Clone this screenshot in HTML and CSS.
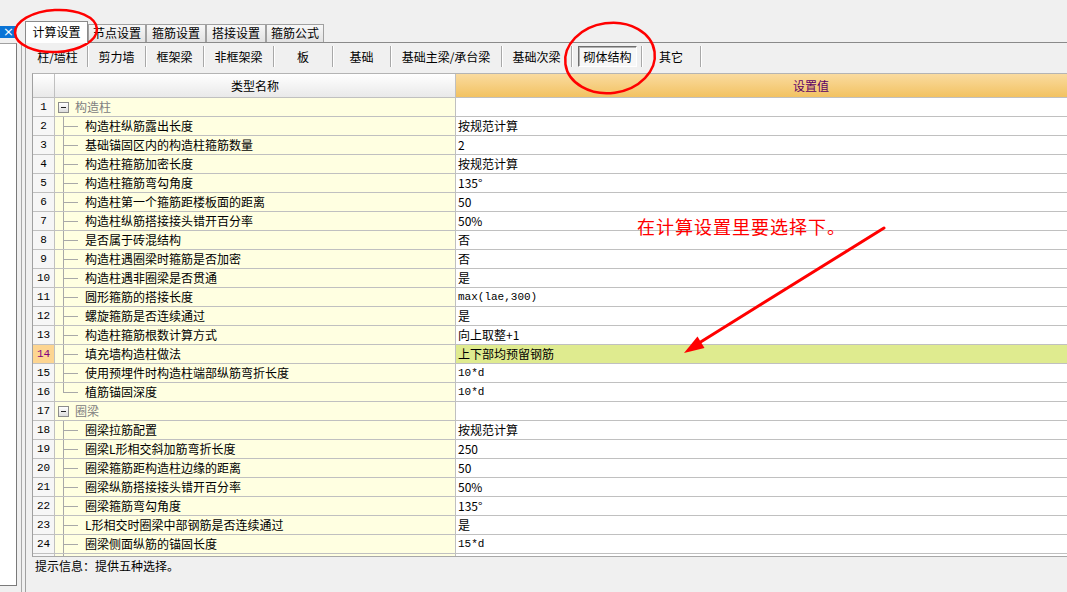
FILE: index.html
```html
<!DOCTYPE html>
<html lang="zh">
<head>
<meta charset="utf-8">
<title>计算设置</title>
<link rel="stylesheet" href="styles.css">
</head>
<body>
<div class="app">
  <aside class="side">
    <div class="closebar"><span class="x">×</span></div>
    <div class="sidepanel"></div>
  </aside>
  <div class="splitter"></div>
  <main class="main">
    <div class="tabs">
      <div class="tab active w63">计算设置</div>
      <div class="tab w58">节点设置</div>
      <div class="tab w60">箍筋设置</div>
      <div class="tab w60">搭接设置</div>
      <div class="tab w58">箍筋公式</div>
    </div>
    <div class="panel">
      <div class="subtabs">
        <div class="sub s60">柱/墙柱</div>
        <div class="sub s58">剪力墙</div>
        <div class="sub s58">框架梁</div>
        <div class="sub s70">非框架梁</div>
        <div class="sub s59">板</div>
        <div class="sub s58">基础</div>
        <div class="sub s111">基础主梁/承台梁</div>
        <div class="sub s70">基础次梁</div>
        <div class="sub s70"><span class="selbox">砌体结构</span></div>
        <div class="sub s59">其它</div>
      </div>
      <div class="grid">
        <div class="ghead">
          <div class="num"></div>
          <div class="name hname">类型名称</div>
          <div class="val hval">设置值</div>
        </div>
        <div class="gbody">
          <div class="row"><div class="num">1</div><div class="name"><span class="tree group"><span class="box"></span></span><span class="gtext">构造柱</span></div><div class="val"></div></div>
          <div class="row"><div class="num">2</div><div class="name"><span class="tree child"></span>构造柱纵筋露出长度</div><div class="val">按规范计算</div></div>
          <div class="row"><div class="num">3</div><div class="name"><span class="tree child"></span>基础锚固区内的构造柱箍筋数量</div><div class="val">2</div></div>
          <div class="row"><div class="num">4</div><div class="name"><span class="tree child"></span>构造柱箍筋加密长度</div><div class="val">按规范计算</div></div>
          <div class="row"><div class="num">5</div><div class="name"><span class="tree child"></span>构造柱箍筋弯勾角度</div><div class="val">135°</div></div>
          <div class="row"><div class="num">6</div><div class="name"><span class="tree child"></span>构造柱第一个箍筋距楼板面的距离</div><div class="val">50</div></div>
          <div class="row"><div class="num">7</div><div class="name"><span class="tree child"></span>构造柱纵筋搭接接头错开百分率</div><div class="val">50%</div></div>
          <div class="row"><div class="num">8</div><div class="name"><span class="tree child"></span>是否属于砖混结构</div><div class="val">否</div></div>
          <div class="row"><div class="num">9</div><div class="name"><span class="tree child"></span>构造柱遇圈梁时箍筋是否加密</div><div class="val">否</div></div>
          <div class="row"><div class="num">10</div><div class="name"><span class="tree child"></span>构造柱遇非圈梁是否贯通</div><div class="val">是</div></div>
          <div class="row"><div class="num">11</div><div class="name"><span class="tree child"></span>圆形箍筋的搭接长度</div><div class="val mono">max(lae,300)</div></div>
          <div class="row"><div class="num">12</div><div class="name"><span class="tree child"></span>螺旋箍筋是否连续通过</div><div class="val">是</div></div>
          <div class="row"><div class="num">13</div><div class="name"><span class="tree child"></span>构造柱箍筋根数计算方式</div><div class="val">向上取整+1</div></div>
          <div class="row current"><div class="num">14</div><div class="name"><span class="tree child"></span>填充墙构造柱做法</div><div class="val">上下部均预留钢筋</div></div>
          <div class="row"><div class="num">15</div><div class="name"><span class="tree child"></span>使用预埋件时构造柱端部纵筋弯折长度</div><div class="val mono">10*d</div></div>
          <div class="row"><div class="num">16</div><div class="name"><span class="tree last"></span>植筋锚固深度</div><div class="val mono">10*d</div></div>
          <div class="row"><div class="num">17</div><div class="name"><span class="tree group"><span class="box"></span></span><span class="gtext">圈梁</span></div><div class="val"></div></div>
          <div class="row"><div class="num">18</div><div class="name"><span class="tree child"></span>圈梁拉筋配置</div><div class="val">按规范计算</div></div>
          <div class="row"><div class="num">19</div><div class="name"><span class="tree child"></span>圈梁L形相交斜加筋弯折长度</div><div class="val">250</div></div>
          <div class="row"><div class="num">20</div><div class="name"><span class="tree child"></span>圈梁箍筋距构造柱边缘的距离</div><div class="val">50</div></div>
          <div class="row"><div class="num">21</div><div class="name"><span class="tree child"></span>圈梁纵筋搭接接头错开百分率</div><div class="val">50%</div></div>
          <div class="row"><div class="num">22</div><div class="name"><span class="tree child"></span>圈梁箍筋弯勾角度</div><div class="val">135°</div></div>
          <div class="row"><div class="num">23</div><div class="name"><span class="tree child"></span>L形相交时圈梁中部钢筋是否连续通过</div><div class="val">是</div></div>
          <div class="row"><div class="num">24</div><div class="name"><span class="tree child"></span>圈梁侧面纵筋的锚固长度</div><div class="val mono">15*d</div></div>
          <div class="row"><div class="num"></div><div class="name"><span class="tree child"></span></div><div class="val"></div></div>
        </div>
      </div>
      <div class="status">提示信息：提供五种选择。</div>
    </div>
  </main>
</div>

<svg class="marks" width="1067" height="592" viewBox="0 0 1067 592">
  <ellipse cx="56" cy="31" rx="41" ry="21" transform="rotate(-3 56 31)" fill="none" stroke="#ff0000" stroke-width="2.5"/>
  <ellipse cx="610" cy="58" rx="45" ry="35" transform="rotate(-8 610 58)" fill="none" stroke="#ff0000" stroke-width="2.5"/>
  <line x1="884" y1="228" x2="699" y2="343" stroke="#ff0000" stroke-width="3" stroke-linecap="round"/>
  <polygon points="684,353 704.5,348 697.5,336.5" fill="#ff0000"/>
</svg>
<div class="note">在计算设置里要选择下。</div>
</body>
</html>
```

FILE: styles.css
```css
* {
  box-sizing: border-box;
}

html, body {
  margin: 0;
  padding: 0;
  width: 1067px;
  height: 592px;
  overflow: hidden;
  background: #f0f0f0;
  font-family: "Noto Sans CJK SC", "Noto Sans", sans-serif;
  font-size: 12px;
  color: #000;
}

.app {
  display: flex;
  width: 1067px;
  height: 592px;
  overflow: hidden;
}

/* left docked panel */
.side {
  width: 17px;
  flex: none;
}

.closebar {
  margin-top: 26px;
  width: 16px;
  height: 12px;
  background: #0a74d6;
  color: #fff;
  font-size: 13px;
  line-height: 11px;
  text-align: right;
  padding-right: 2px;
  font-family: "DejaVu Sans", sans-serif;
}

.sidepanel {
  margin-top: 5px;
  height: 543px;
  background: #fff;
  border-top: 1px solid #a0a0a0;
  border-right: 1px solid #7a7a7a;
  border-bottom: 1px solid #7a7a7a;
}

.splitter {
  width: 8px;
  flex: none;
  margin-top: 43px;
  height: 549px;
  background: linear-gradient(#a8a8a8, #a8a8a8) no-repeat 4px 0 / 1px 100%;
}

/* main area */
.main {
  flex: 1;
  min-width: 0;
  overflow: hidden;
  display: flex;
  flex-direction: column;
}

.tabs {
  display: flex;
  align-items: flex-end;
  height: 21px;
  margin-top: 21px;
  flex: none;
}

.tab {
  height: 18px;
  border: 1px solid #a0a0a0;
  border-bottom: none;
  background: linear-gradient(#f7f7f7, #e2e2e2);
  text-align: center;
  line-height: 16px;
  white-space: nowrap;
}

.tab.active {
  height: 22px;
  margin-bottom: -1px;
  background: #fff;
  border-color: #8a8a8a;
  line-height: 20px;
  position: relative;
  z-index: 1;
}

.w63 { width: 63px; }
.w58 { width: 58px; }
.w60 { width: 60px; }

.panel {
  flex: 1;
  border-top: 1px solid #8a8a8a;
  border-left: 1px solid #a0a0a0;
  padding-left: 2px;
  display: flex;
  flex-direction: column;
  min-width: 0;
}

.subtabs {
  display: flex;
  height: 30px;
  padding-top: 3px;
  flex: none;
}

.sub {
  height: 21px;
  line-height: 21px;
  text-align: center;
  border-right: 1px solid #a8a8a8;
  box-shadow: 1px 0 0 #fff;
  white-space: nowrap;
  flex: none;
}

.s58 { width: 58px; }
.s59 { width: 59px; }
.s60 { width: 60px; }
.s70 { width: 70px; }
.s111 { width: 111px; }

.selbox {
  display: block;
  margin: 0 4px 0 6px;
  height: 21px;
  line-height: 19px;
  border: 1px solid;
  border-color: #6e6e6e #ffffff #ffffff #6e6e6e;
  box-shadow: inset 1px 1px 0 #b0b0b0;
  background: #f7f7f7;
}

/* grid */
.grid {
  margin-left: 4px;
  width: 1134px;
  border-top: 1px solid #b4b4b4;
  border-left: 1px solid #a0a0a0;
  border-bottom: 1px solid #a8a8a8;
  flex: none;
}

.ghead {
  display: flex;
  height: 24px;
  border-bottom: 1px solid #c0c0c0;
}

.ghead .num,
.ghead .hname {
  background: linear-gradient(#ffffff, #e9e9e9);
}

.ghead .hname {
  justify-content: center;
  line-height: 23px;
}

.ghead .hval {
  background: linear-gradient(#fadb9f, #f2c262);
  text-align: center;
  line-height: 23px;
  color: #5c0066;
  padding-left: 0;
}

.gbody {
  height: 458px;
  overflow: hidden;
}

.row {
  display: flex;
  height: 19px;
  border-bottom: 1px solid #c0c0c0;
}

.num {
  width: 22px;
  flex: none;
  border-right: 1px solid #c0c0c0;
  background: #f6f6f6;
  text-align: center;
  line-height: 18px;
  font-size: 11px;
  font-family: "Liberation Mono", "DejaVu Sans Mono", monospace;
  color: #000;
}

.name {
  width: 401px;
  flex: none;
  border-right: 1px solid #c0c0c0;
  background: #ffffe1;
  line-height: 18px;
  display: flex;
  white-space: nowrap;
  overflow: hidden;
}

.val {
  width: 710px;
  flex: none;
  background: #fff;
  line-height: 18px;
  padding-left: 2px;
  white-space: nowrap;
}

.mono {
  font-family: "Liberation Mono", "DejaVu Sans Mono", monospace;
  font-size: 11px;
}

.row.current .num {
  background: #fdd591;
  color: #800080;
}

.row.current .val {
  background: #dfeb8f;
}

/* tree lines */
.tree {
  width: 30px;
  height: 18px;
  flex: none;
}

.tree.child {
  background:
    linear-gradient(#a8a8a8, #a8a8a8) no-repeat 8px 0 / 1px 100%,
    linear-gradient(#a8a8a8, #a8a8a8) no-repeat 8px 9px / 15px 1px;
}

.tree.last {
  background:
    linear-gradient(#a8a8a8, #a8a8a8) no-repeat 8px 0 / 1px 10px,
    linear-gradient(#a8a8a8, #a8a8a8) no-repeat 8px 9px / 15px 1px;
}

.tree.group {
  width: 20px;
  display: flex;
  align-items: center;
  padding-left: 3px;
}

.box {
  display: block;
  width: 11px;
  height: 11px;
  border: 1px solid #8c8c8c;
  background:
    linear-gradient(#222, #222) no-repeat center / 5px 1px,
    linear-gradient(#ffffff, #dcdcdc);
}

.gtext {
  color: #808080;
}

/* status line */
.status {
  padding: 1px 0 0 7px;
  line-height: 16px;
}

/* annotations drawn on top of the screenshot */
.marks {
  position: absolute;
  left: 0;
  top: 0;
  pointer-events: none;
}

.note {
  position: absolute;
  left: 637px;
  top: 215px;
  font-size: 18px;
  line-height: 22px;
  letter-spacing: 1px;
  color: #ff0000;
  white-space: nowrap;
}
```
